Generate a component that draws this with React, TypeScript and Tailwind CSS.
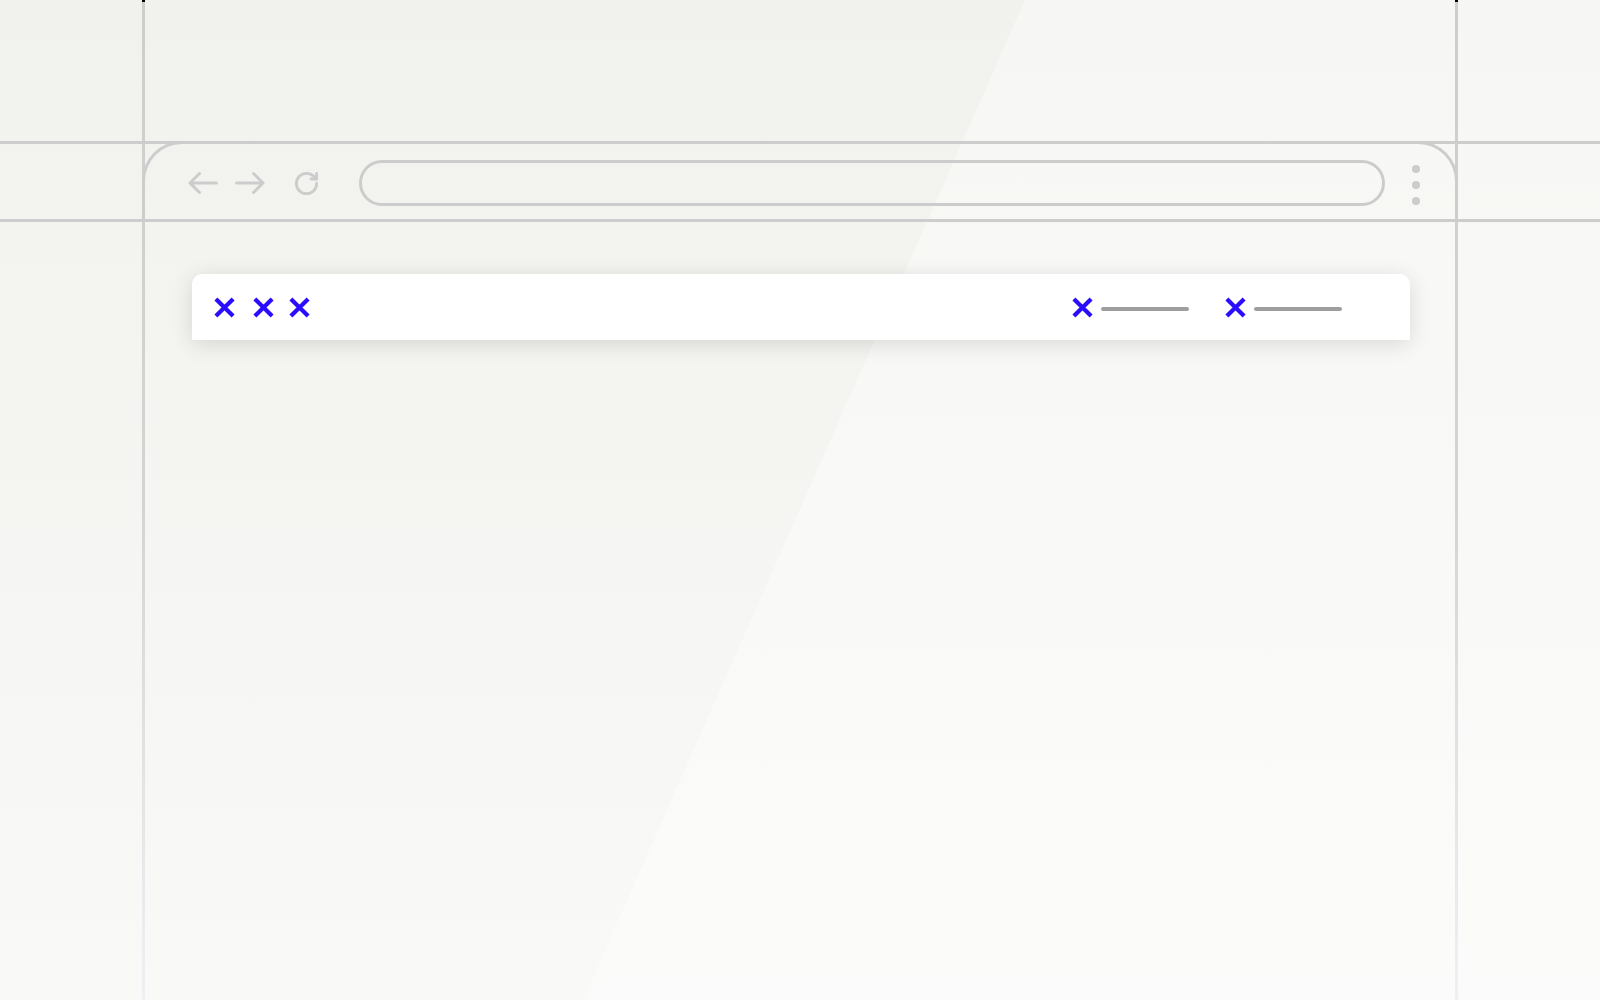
import React from "react";

function XMark() {
  return (
    <svg width="23" height="23" viewBox="0 0 23 23" className="shrink-0">
      <path d="M2.9 2.9L20.1 20.1M20.1 2.9L2.9 20.1" stroke="#2a0dff" strokeWidth="4.2" fill="none" />
    </svg>
  );
}

function BackArrow({ flip }: { flip?: boolean }) {
  return (
    <svg width="30" height="24" viewBox="0 0 30 24" className={flip ? "-scale-x-100" : ""}>
      <path
        d="M28.5 12H2M11.5 2.5L2 12L11.5 21.5"
        stroke="#cccccc"
        strokeWidth="3"
        strokeLinecap="round"
        strokeLinejoin="round"
        fill="none"
      />
    </svg>
  );
}

function Refresh() {
  return (
    <svg width="27" height="27" viewBox="0 0 24 24">
      <path
        d="M21 12a9 9 0 1 1-9-9c2.52 0 4.93 1 6.74 2.74L21 8"
        stroke="#cccccc"
        strokeWidth="2.6"
        strokeLinecap="round"
        strokeLinejoin="round"
        fill="none"
      />
      <path d="M21 3v5h-5" stroke="#cccccc" strokeWidth="2.6" strokeLinecap="round" strokeLinejoin="round" fill="none" />
    </svg>
  );
}

export default function App() {
  return (
    <div className="relative h-[1000px] w-full overflow-hidden bg-gradient-to-b from-[#f1f1ed] to-[#f9f9f8] font-['Liberation_Sans',sans-serif]">
      {/* diagonal light sheen */}
      <div className="pointer-events-none absolute inset-0 bg-white/40 [clip-path:polygon(1025px_0,100%_0,100%_100%,583px_100%)]" />

      {/* vertical guide lines */}
      <div className="pointer-events-none absolute left-[142px] top-0 h-full w-[3px] bg-gradient-to-b from-[#cdcdcd] via-[#d4d4d4] to-[#eef0f4]">
        <div className="h-[2px] w-full bg-black" />
      </div>
      <div className="pointer-events-none absolute left-[1455px] top-0 h-full w-[3px] bg-gradient-to-b from-[#cdcdcd] via-[#d4d4d4] to-[#eef0f4]">
        <div className="h-[2px] w-full bg-black" />
      </div>

      <div className="relative flex flex-col pt-[141px]">
        {/* toolbar band */}
        <div className="h-[81px] border-y-[3px] border-[#cdcdcd]">
          <div className="-mt-[3px] ml-[142px] flex h-[81px] w-[1316px] items-center rounded-t-[40px] border-x-[3px] border-t-[3px] border-[#cdcdcd] pl-[43px] pr-[35px]">
            <BackArrow />
            <div className="ml-[17px]">
              <BackArrow flip />
            </div>
            <div className="ml-[28px] mt-[1px]">
              <Refresh />
            </div>
            <div className="ml-[39px] h-[46px] flex-1 rounded-full border-[3px] border-[#cccccc]" />
            <div className="ml-[27px] mt-[4px] flex flex-col gap-[8px]">
              <div className="h-[8px] w-[8px] rounded-full bg-[#cccccc]" />
              <div className="h-[8px] w-[8px] rounded-full bg-[#cccccc]" />
              <div className="h-[8px] w-[8px] rounded-full bg-[#cccccc]" />
            </div>
          </div>
        </div>

        {/* white bar */}
        <div className="ml-[192px] mt-[52px] flex h-[66px] w-[1218px] items-center rounded-t-[10px] bg-white pl-[21px] pr-[68px] shadow-[0_4px_22px_rgba(0,0,0,0.13)]">
          <XMark />
          <div className="ml-[16px]">
            <XMark />
          </div>
          <div className="ml-[13px]">
            <XMark />
          </div>
          <div className="flex-1" />
          <div className="flex items-center">
            <XMark />
            <div className="ml-[7px] mt-[3px] h-[4px] w-[88px] rounded-full bg-[#9e9e9e]" />
          </div>
          <div className="ml-[35px] flex items-center">
            <XMark />
            <div className="ml-[7px] mt-[3px] h-[4px] w-[88px] rounded-full bg-[#9e9e9e]" />
          </div>
        </div>
      </div>
    </div>
  );
}
